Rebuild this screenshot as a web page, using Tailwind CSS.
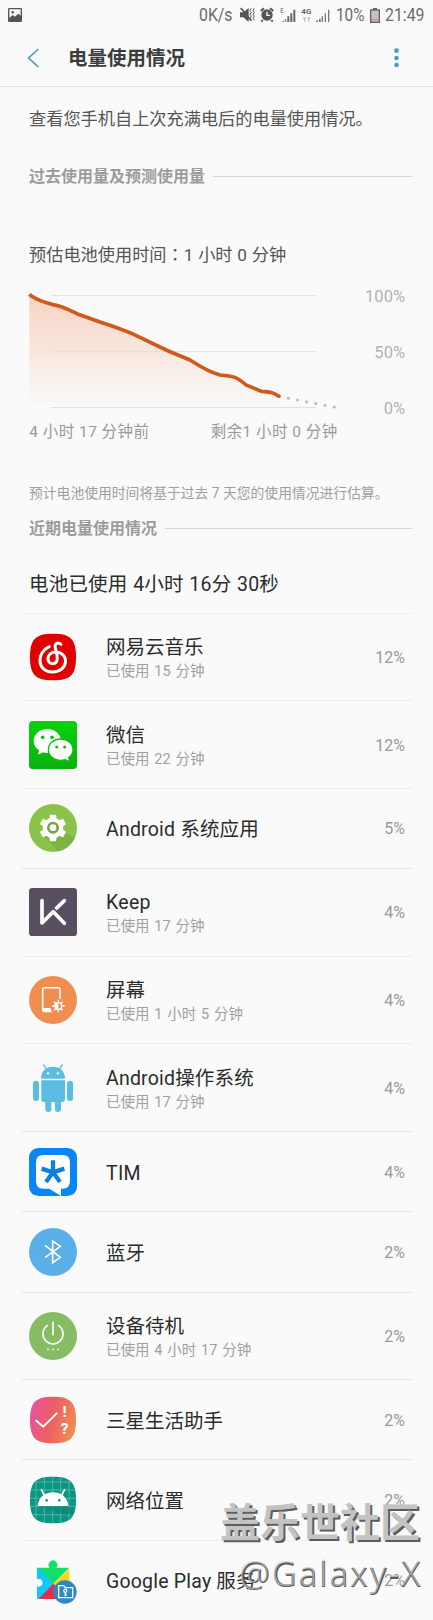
<!DOCTYPE html>
<html lang="zh-CN">
<head>
  <meta charset="UTF-8">
  <title>电量使用情况</title>
  <script src="https://cdn.jsdelivr.net/npm/@tailwindcss/browser@4"></script>
</head>
<body class="bg-[#fafafa] font-[Roboto,'Noto_Sans_CJK_SC',sans-serif]">
<div class="relative w-[433px] h-[1620px] overflow-hidden">

  <!-- Status bar -->
  <div class="h-[30px] flex items-center text-[17.6px] text-[#6a6a6a] leading-none">
    <svg class="ml-2 w-[14px] h-[14px] shrink-0" viewBox="0 0 42 42"><path fill="#555" fill-rule="evenodd" d="M4 0h34a4 4 0 0 1 4 4v34a4 4 0 0 1-4 4H4a4 4 0 0 1-4-4V4a4 4 0 0 1 4-4zM4 4v26l10-9 6 5 12-9 6 6V4zM14 9a4 4 0 1 1 0 8 4 4 0 0 1 0-8z"/></svg>
    <span class="ml-[177px] w-[33px] shrink-0 whitespace-nowrap pt-0.5"><span class="inline-block origin-left scale-x-[.9]">0K/s</span></span>
    <!-- mute, alarm, signals -->
    <svg class="ml-[8px] w-[92px] h-[18px] shrink-0" viewBox="0 0 276 54">
      <path fill="#555" d="M0 19h10L26 6v42L10 34H0z"/>
      <path stroke="#555" stroke-width="5" d="M2 6l32 38"/>
      <path stroke="#555" stroke-width="3" fill="none" d="M34 7l-4 6 4 6-4 6 4 6-4 6 4 6M43 7l-4 6 4 6-4 6 4 6-4 6 4 6"/>
      <circle cx="81" cy="27" r="17" fill="#555"/>
      <path stroke="#555" stroke-width="6" d="M62 15l10-8M100 15l-10-8M68 42l-4 5M94 42l4 5"/>
      <path stroke="#fafafa" stroke-width="4" fill="none" d="M81 17v11h9"/>
      <text x="121" y="21" font-size="19" fill="#666">E</text>
      <path fill="#999" d="M127 44h5v4h-5zM134 39h5v9h-5z"/>
      <path fill="#666" d="M142 31h6v17h-6zM151 22h6v26h-6zM160 11h6v37h-6z"/>
      <text x="184" y="23" font-size="24" font-weight="bold" fill="#666">4G</text>
      <path fill="#bbb" d="M190 34h7v6h-7zM203 34h7v6h-7zM192 40h3v7h-3zM205 40h3v7h-3z"/>
      <path fill="#777" d="M229 43h5v5h-5zM237 38h5v10h-5zM245 31h4v17h-4zM254 22h4v26h-4zM264 11h4v37h-4z"/>
    </svg>
    <span class="ml-[4px] w-[29px] shrink-0 whitespace-nowrap pt-0.5"><span class="inline-block origin-left scale-x-[.87]">10%</span></span>
    <svg class="ml-[5px] w-[10px] h-[15px] shrink-0" viewBox="0 0 30 45"><path fill="#666" d="M9 0h12v4h-12zM0 4h30v41H0z"/><path fill="#c4c4c4" d="M4 8h22v26H4z"/><path fill="#e3aaa0" d="M4 34h22v7H4z"/></svg>
    <span class="ml-[5px] whitespace-nowrap pt-0.5"><span class="inline-block origin-left scale-x-[.9]">21:49</span></span>
  </div>

  <!-- Title bar -->
  <header class="h-[57px] flex items-center border-b border-[#e2e2e2]">
    <svg class="ml-[27px] w-3 h-5 shrink-0" viewBox="0 0 36 60"><path fill="none" stroke="#4c9db3" stroke-width="5" d="M34 3L5 30l29 27"/></svg>
    <h1 class="ml-[29px] pt-0.5 flex-1 text-[19.5px] font-bold text-[#3c3c3c]">电量使用情况</h1>
    <svg class="mr-[34px] w-[5px] h-5 shrink-0" viewBox="0 0 15 60" fill="#4c9db3"><circle cx="7.5" cy="8" r="7"/><circle cx="7.5" cy="30" r="7"/><circle cx="7.5" cy="51" r="7"/></svg>
  </header>

  <p class="mt-[19px] ml-[29px] h-[26px] leading-[26px] text-[17.2px] text-[#555] whitespace-nowrap">查看您手机自上次充满电后的电量使用情况。</p>

  <div class="mt-[32px] ml-[29px] mr-[21px] h-6 flex items-center gap-2">
    <h2 class="pt-0.5 text-[16px] leading-6 font-bold text-[#9c9c9c]">过去使用量及预测使用量</h2>
    <div class="flex-1 border-t border-[#d6d6d6]"></div>
  </div>

  <p class="mt-[53px] ml-[29px] h-[26px] leading-[26px] text-[17.2px] [word-spacing:0.5px] text-[#555] whitespace-nowrap">预估电池使用时间<span class="font-['Noto_Sans_CJK_TC']" lang="zh-TW">：</span>1 小时 0 分钟</p>

  <!-- Battery history chart -->
  <svg class="block mt-[3px] w-[433px] h-[190px]" viewBox="0 0 1299 570">
    <defs>
      <linearGradient id="fill" x1="0" y1="0" x2="0" y2="1">
        <stop offset="0" stop-color="#f6d3c2"/>
        <stop offset="1" stop-color="#fafafa"/>
      </linearGradient>
    </defs>
    <path fill="url(#fill)" d="M88 74C108 92 130 95 155 104C190 109 210 122 235 134L300 157L345 172L395 191L505 243L570 271C600 290 620 305 660 316C700 319 712 322 738 345L785 365C810 366 820 368 836 379V411H88z"/>
    <path stroke="#eadfda" stroke-width="3" d="M152 76.500H948M152 244.500H948"/>
    <path stroke="#e2e0df" stroke-width="3" d="M152 412.500H948"/>
    <path fill="none" stroke="#d0591b" stroke-width="11" d="M88 73C108 91 130 94 155 103C190 108 210 121 235 133L300 156L345 171L395 190L505 243L570 270C600 289 620 304 660 315C700 318 712 321 738 345L785 364C810 365 820 367 836 379"/>
    <circle cx="837" cy="379" r="5.500" fill="#d0591b"/>
    <path fill="none" stroke="#b3bcba" stroke-width="9" stroke-linecap="round" stroke-dasharray="0 28" d="M865 384.500L1006 412"/>
    <g font-size="49.500" fill="#b2b2b2" text-anchor="end">
      <text x="1215" y="95">100%</text>
      <text x="1215" y="263">50%</text>
      <text x="1215" y="431">0%</text>
    </g>
    <g font-size="46.500" fill="#999">
      <text x="88" y="500" textLength="359">4 小时 17 分钟前</text>
      <text x="632" y="500" textLength="380">剩余1 小时 0 分钟</text>
    </g>
  </svg>

  <p class="mt-[22px] ml-[29px] h-[22px] leading-[22px] text-[13.8px] text-[#9e9e9e] whitespace-nowrap">预计电池使用时间将基于过去 7 天您的使用情况进行估算。</p>

  <div class="mt-[12px] ml-[29px] mr-[21px] h-6 flex items-center gap-2">
    <h2 class="pt-0.5 text-[16px] leading-6 font-bold text-[#9c9c9c]">近期电量使用情况</h2>
    <div class="flex-1 border-t border-[#d6d6d6]"></div>
  </div>

  <div class="ml-[22px] mr-[21px] h-[73.5px] border-b border-[#ededed] pl-[7px] pt-[31px]">
    <p class="leading-7 text-[19.5px] tracking-[.2px] [word-spacing:.6px] text-[#2b2b2b] whitespace-nowrap">电池已使用 4小时 16分 30秒</p>
  </div>

  <!-- App list -->
  <ul class="ml-[22px] mr-[21px]">
    <li class="h-[87.7px] flex items-center border-b border-[#ededed] pl-[7px] pr-[7px]">
      <svg class="w-12 h-12 shrink-0" viewBox="0 0 144 144">
        <path fill="#e00000" d="M72 2C124 2 141 18 141 72S124 142 72 142 3 126 3 72 20 2 72 2z"/>
        <path fill="none" stroke="#fff" stroke-width="9" stroke-linecap="round" d="M61 41C22 57 22 116 70 117C120 116 122 58 80 57C52 57 50 92 71 92C90 91 86 70 79 45C76 29 88 27 96 34"/>
      </svg>
      <div class="ml-[29px] flex-1 pt-1">
        <div class="h-[25px] leading-[25px] text-[19.5px] text-[#2b2b2b]">网易云音乐</div>
        <div class="h-[23px] leading-[23px] text-[14.5px] [word-spacing:1.2px] text-[#a0a0a0]">已使用 15 分钟</div>
      </div>
      <span class="pt-0.5 text-base text-[#999]">12%</span>
    </li>
    <li class="h-[87.7px] flex items-center border-b border-[#ededed] pl-[7px] pr-[7px]">
      <svg class="w-12 h-12 shrink-0" viewBox="0 0 144 144">
        <defs><linearGradient id="wx" x1="0" y1="0" x2="0" y2="1"><stop offset="0" stop-color="#06d40e"/><stop offset="1" stop-color="#0bb00f"/></linearGradient></defs>
        <rect width="144" height="144" rx="11" fill="url(#wx)"/>
        <path fill="#fff" d="M55 24c23 0 41 16 41 36S78 96 55 96c-5 0-9-1-13-2l-15 7 3-13C20 81 14 71 14 60c0-20 18-36 41-36z"/>
        <path fill="#fff" stroke="#0abf10" stroke-width="4" d="M95 54c-21 0-37 14-37 32s16 32 37 32c5 0 9-1 13-2l14 6-3-12c8-6 13-14 13-24 0-18-16-32-37-32z"/>
        <g fill="#0abf10"><circle cx="41" cy="49" r="5.500"/><circle cx="69" cy="49" r="5.500"/><circle cx="83" cy="78" r="4.500"/><circle cx="107" cy="78" r="4.500"/></g>
      </svg>
      <div class="ml-[29px] flex-1 pt-1">
        <div class="h-[25px] leading-[25px] text-[19.5px] text-[#2b2b2b]">微信</div>
        <div class="h-[23px] leading-[23px] text-[14.5px] [word-spacing:1.2px] text-[#a0a0a0]">已使用 22 分钟</div>
      </div>
      <span class="pt-0.5 text-base text-[#999]">12%</span>
    </li>
    <li class="h-[80.2px] flex items-center border-b border-[#e4e4e4] pl-[7px] pr-[7px]">
      <svg class="w-12 h-12 shrink-0" viewBox="0 0 144 144">
        <circle cx="72" cy="72" r="72" fill="#8bc34a"/>
        <path fill="#7cb342" d="M45 96l42 46a72 72 0 0 0 50-40l-32-20z"/>
        <g fill="#fff">
          <circle cx="72" cy="72" r="31"/>
          <rect x="62" y="32" width="20" height="80" rx="3"/>
          <rect x="62" y="32" width="20" height="80" rx="3" transform="rotate(60 72 72)"/>
          <rect x="62" y="32" width="20" height="80" rx="3" transform="rotate(120 72 72)"/>
        </g>
        <circle cx="72" cy="71" r="14" fill="#fff" stroke="#74a83f" stroke-width="8"/>
      </svg>
      <div class="ml-[29px] pt-[3px] flex-1 text-[19.5px] tracking-[.2px] text-[#2b2b2b]">Android 系统应用</div>
      <span class="pt-0.5 text-base text-[#999]">5%</span>
    </li>
    <li class="h-[87.7px] flex items-center border-b border-[#ededed] pl-[7px] pr-[7px]">
      <svg class="w-12 h-12 shrink-0" viewBox="0 0 144 144">
        <rect width="144" height="144" rx="10" fill="#584f60"/>
        <g fill="none" stroke="#fff" stroke-width="11" stroke-linecap="round" stroke-linejoin="round">
          <path d="M39 38v67l34-34 33 35"/>
          <path d="M106 38L82 61"/>
        </g>
        <path stroke="#584f60" stroke-width="4" d="M68 56l22 20"/>
      </svg>
      <div class="ml-[29px] flex-1 pt-1">
        <div class="h-[25px] leading-[25px] text-[19.5px] tracking-[.3px] text-[#2b2b2b]">Keep</div>
        <div class="h-[23px] leading-[23px] text-[14.5px] [word-spacing:1.2px] text-[#a0a0a0]">已使用 17 分钟</div>
      </div>
      <span class="pt-0.5 text-base text-[#999]">4%</span>
    </li>
    <li class="h-[87.7px] flex items-center border-b border-[#ededed] pl-[7px] pr-[7px]">
      <svg class="w-12 h-12 shrink-0" viewBox="0 0 144 144">
        <circle cx="72" cy="72" r="72" fill="#f08e52"/>
        <path fill="none" stroke="#fff" stroke-width="4.500" d="M93 69V41q0-6-6-6H47q-6 0-6 6v60"/>
        <path fill="#fff" d="M39 96h25l5 13H45q-6 0-6-7z"/>
        <path stroke="#fff" stroke-width="4" d="M88 71v38M69 90h38M75 77l26 26M101 77l-26 26"/>
        <circle cx="88" cy="90" r="12" fill="#fff"/>
        <path fill="#f08e52" d="M88 82a8 8 0 0 1 0 16z"/>
      </svg>
      <div class="ml-[29px] flex-1 pt-1">
        <div class="h-[25px] leading-[25px] text-[19.5px] text-[#2b2b2b]">屏幕</div>
        <div class="h-[23px] leading-[23px] text-[14.5px] [word-spacing:1.2px] text-[#a0a0a0]">已使用 1 小时 5 分钟</div>
      </div>
      <span class="pt-0.5 text-base text-[#999]">4%</span>
    </li>
    <li class="h-[87.7px] flex items-center border-b border-[#e4e4e4] pl-[7px] pr-[7px]">
      <svg class="w-12 h-12 shrink-0" viewBox="0 0 144 144">
        <g fill="#5bbde0">
          <path d="M36 44C36 20 52 8 72 8s36 12 36 36z"/>
          <path d="M37 49h71v57q0 8-8 8H45q-8 0-8-8z"/>
          <rect x="12" y="50" width="18" height="61" rx="9"/>
          <rect x="114" y="50" width="18" height="61" rx="9"/>
          <rect x="49" y="99" width="18" height="45" rx="9"/>
          <rect x="78" y="99" width="18" height="45" rx="9"/>
          <path stroke="#5bbde0" stroke-width="4" stroke-linecap="round" d="M52 14L44 3M92 14l8-11"/>
        </g>
        <circle cx="57" cy="28" r="3.500" fill="#fff"/><circle cx="87" cy="28" r="3.500" fill="#fff"/>
      </svg>
      <div class="ml-[29px] flex-1 pt-1">
        <div class="h-[25px] leading-[25px] text-[19.5px] tracking-[.2px] text-[#2b2b2b]">Android操作系统</div>
        <div class="h-[23px] leading-[23px] text-[14.5px] [word-spacing:1.2px] text-[#a0a0a0]">已使用 17 分钟</div>
      </div>
      <span class="pt-0.5 text-base text-[#999]">4%</span>
    </li>
    <li class="h-[80.2px] flex items-center border-b border-[#e4e4e4] pl-[7px] pr-[7px]">
      <svg class="w-12 h-12 shrink-0" viewBox="0 0 144 144">
        <rect width="144" height="144" rx="28" fill="#0986f5"/>
        <path fill="#fff" d="M43 21h58q22 0 22 22v56q0 23-22 23h-5v22l-35-22H43q-22 0-22-23V43q0-22 22-22z"/>
        <path stroke="#0c80e0" stroke-width="13" d="M72 73V37M72 73L38 62M72 73l34-11M72 73l-21 29M72 73l21 29"/>
      </svg>
      <div class="ml-[29px] pt-[3px] flex-1 text-[19.5px] tracking-[.3px] text-[#2b2b2b]">TIM</div>
      <span class="pt-0.5 text-base text-[#999]">4%</span>
    </li>
    <li class="h-[80.2px] flex items-center border-b border-[#e4e4e4] pl-[7px] pr-[7px]">
      <svg class="w-12 h-12 shrink-0" viewBox="0 0 144 144">
        <circle cx="72" cy="72" r="72" fill="#5aafe8"/>
        <path fill="none" stroke="#fff" stroke-width="5" d="M48 52l46 36-23 16V39l23 16-46 34"/>
      </svg>
      <div class="ml-[29px] pt-[3px] flex-1 text-[19.5px] text-[#2b2b2b]">蓝牙</div>
      <span class="pt-0.5 text-base text-[#999]">2%</span>
    </li>
    <li class="h-[87.7px] flex items-center border-b border-[#e4e4e4] pl-[7px] pr-[7px]">
      <svg class="w-12 h-12 shrink-0" viewBox="0 0 144 144">
        <circle cx="72" cy="72" r="72" fill="#86bd64"/>
        <path fill="none" stroke="#fff" stroke-width="5" stroke-linecap="round" d="M72 31v37M55 41a30 30 0 1 0 34 0"/>
        <g fill="#fff"><circle cx="57" cy="112" r="2.800"/><circle cx="72" cy="112" r="2.800"/><circle cx="87" cy="112" r="2.800"/></g>
      </svg>
      <div class="ml-[29px] flex-1 pt-1">
        <div class="h-[25px] leading-[25px] text-[19.5px] text-[#2b2b2b]">设备待机</div>
        <div class="h-[23px] leading-[23px] text-[14.5px] [word-spacing:1.2px] text-[#a0a0a0]">已使用 4 小时 17 分钟</div>
      </div>
      <span class="pt-0.5 text-base text-[#999]">2%</span>
    </li>
    <li class="h-[80.2px] flex items-center border-b border-[#e4e4e4] pl-[7px] pr-[7px]">
      <svg class="w-12 h-12 shrink-0" viewBox="0 0 144 144">
        <defs>
          <linearGradient id="life" x1="0" y1=".55" x2="1" y2=".85"><stop offset="0" stop-color="#e8549a"/><stop offset=".4" stop-color="#ec5f62"/><stop offset="1" stop-color="#ef9450"/></linearGradient>
        </defs>
        <path fill="url(#life)" d="M72 2C124 2 141 18 141 72S124 142 72 142 3 126 3 72 20 2 72 2z"/>
        <path fill="none" stroke="#fff" stroke-width="6" stroke-linecap="round" stroke-linejoin="round" d="M22 74l21 18 40-40"/>
        <g font-size="46" font-weight="bold" fill="#fff" text-anchor="middle">
          <text x="107" y="64">!</text>
          <text x="107" y="115">?</text>
        </g>
      </svg>
      <div class="ml-[29px] pt-[3px] flex-1 text-[19.5px] text-[#2b2b2b]">三星生活助手</div>
      <span class="pt-0.5 text-base text-[#999]">2%</span>
    </li>
    <li class="h-[80.2px] flex items-center border-b border-[#ededed] pl-[7px] pr-[7px]">
      <svg class="w-12 h-12 shrink-0" viewBox="0 0 144 144">
        <path fill="#0c9682" d="M72 2C124 2 141 18 141 72S124 142 72 142 3 126 3 72 20 2 72 2z"/>
        <path stroke="#6cc4b8" stroke-width="2" d="M21 16v112M46 4v136M71 2v140M95 4v136M120 16v112M16 18h112M5 42h134M3 67h138M4 91h136M10 116h124"/>
        <path fill="#0a7d6d" d="M26 90h92l12 12v14l-30 0z" opacity=".5"/>
        <path fill="#fff" d="M26 90C28 64 48 49 72 49s44 15 46 41z"/>
        <path stroke="#fff" stroke-width="5" stroke-linecap="round" d="M46 58L37 41M98 58l9-17"/>
        <circle cx="53" cy="73" r="4" fill="#0c9682"/><circle cx="91" cy="73" r="4" fill="#0c9682"/>
      </svg>
      <div class="ml-[29px] pt-[3px] flex-1 text-[19.5px] text-[#2b2b2b]">网络位置</div>
      <span class="pt-0.5 text-base text-[#999]">2%</span>
    </li>
    <li class="h-[80.2px] flex items-center border-b border-[#ededed] pl-[7px] pr-[7px]">
      <svg class="w-12 h-12 shrink-0" viewBox="0 0 144 144">
        <path fill="#12e06c" d="M24 35h38a13 13 0 1 1 20 0h39L72 84z"/>
        <path fill="#fbd613" d="M121 38v89L72 84z"/>
        <path fill="#e0314f" d="M26 129l46-47 46 47z"/>
        <path fill="#12c8fb" d="M28 35q-4 0-4 4v30a12 12 0 1 1 0 22v34q0 4 4 4l45-46z"/>
        <circle cx="108" cy="108" r="35" fill="#2f87c5"/>
        <g fill="none" stroke="#fff" stroke-width="4">
          <path d="M89 125V89h15l5 6h22v30z"/>
          <circle cx="109" cy="104" r="4.500"/><path d="M109 108v13M109 116h5"/>
        </g>
      </svg>
      <div class="ml-[29px] pt-[3px] flex-1 text-[19.5px] tracking-[.2px] text-[#2b2b2b]">Google Play 服务</div>
      <span class="pt-0.5 text-base text-[#999]">2%</span>
    </li>
  </ul>

  <!-- Forum watermark -->
  <svg class="absolute left-[213px] top-[1490px] w-[220px] h-[130px]" viewBox="0 0 220 130">
    <g font-family="Noto Sans CJK SC" font-size="40" font-weight="bold">
      <text x="9" y="49" textLength="200" fill="#5c5c5c">盖乐世社区</text>
      <text x="7" y="47" textLength="200" fill="#c3c3c3">盖乐世社区</text>
    </g>
    <g font-family="Open Sans" font-size="34">
      <text x="27" y="97" textLength="181" font-weight="400" fill="#5c5c5c">@Galaxy-X</text>
      <text x="26" y="96" textLength="181" font-weight="300" fill="#c3c3c3" opacity=".7">@Galaxy-X</text>
    </g>
  </svg>
</div>
</body>
</html>
